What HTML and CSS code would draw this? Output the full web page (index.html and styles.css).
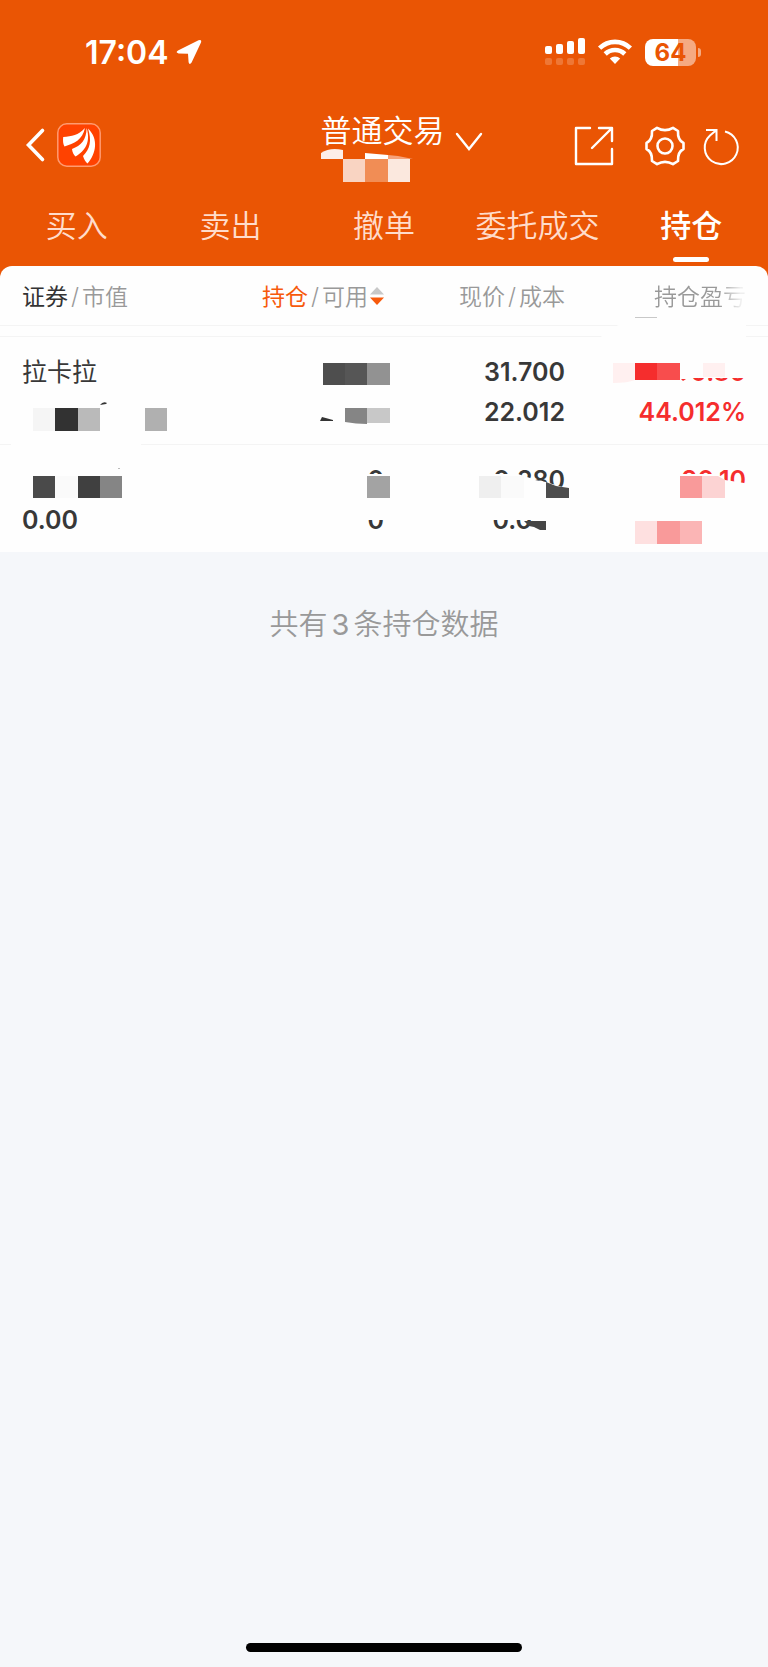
FILE: index.html
```html
<!DOCTYPE html>
<html lang="zh-CN">
<head>
  <meta charset="UTF-8" />
  <meta name="viewport" content="width=device-width, initial-scale=1" />
  <title>普通交易 - 持仓</title>
  <link rel="stylesheet" href="styles.css">
</head>
<body>
  <header class="header">
    <!-- 状态栏 -->
    <div class="status">
      <div class="status-left">
        <span class="time">17:04</span>
        <svg width="26" height="26" viewBox="0 0 26 26"><path d="M2 11.500 22.500 1.200Q26 0 25 3.500L15.600 23.500Q13.500 26.500 12.600 23.200L12 14.800 2.600 14.400Q-1 13.400 2 11.500Z" fill="#fff"/></svg>
      </div>
      <div class="status-right">
        <svg width="40" height="28" viewBox="0 0 40 28" fill="#fff">
          <rect x="0" y="8" width="7" height="8" rx="2"/><rect x="11" y="6" width="7" height="10" rx="2"/>
          <rect x="22" y="3" width="7" height="13" rx="2"/><rect x="33" y="0" width="7" height="16" rx="2"/>
          <g opacity=".2"><rect x="0" y="20" width="7" height="7" rx="2"/><rect x="11" y="20" width="7" height="7" rx="2"/><rect x="22" y="20" width="7" height="7" rx="2"/><rect x="33" y="20" width="7" height="7" rx="2"/></g>
        </svg>
        <svg width="34" height="26" viewBox="0 0 34 26">
          <g fill="none" stroke="#fff" stroke-width="4.6"><path d="M1.6 9.2a22 22 0 0 1 30.8 0"/><path d="M7.2 15a14 14 0 0 1 19.6 0"/></g>
          <path d="M11.8 19.6a7.4 7.4 0 0 1 10.4 0L17 25Z" fill="#fff"/>
        </svg>
        <span class="battery"><span class="battery-body">64</span><span class="battery-cap"></span></span>
      </div>
    </div>

    <!-- 导航栏 -->
    <div class="nav">
      <div class="nav-left">
        <button class="icon-btn" aria-label="返回">
          <svg width="20" height="34" viewBox="0 0 20 34"><path d="M16.500 2.500 2.500 17 16.500 31.500" fill="none" stroke="#fff" stroke-width="3.600" stroke-linecap="round"/></svg>
        </button>
        <a class="logo" href="#" aria-label="首页">
          <svg width="44" height="44" viewBox="0 0 44 44">
            <rect x=".8" y=".8" width="42.400" height="42.400" rx="9" fill="#ff4200" stroke="#ff9a70" stroke-width="1.500"/>
            <g fill="#fff">
              <path d="M28 5C21 12.500 15 13 6.200 14 5.800 18 6 21 7.500 23.500 17 20.500 25.500 17 28 5Z"/>
              <path d="M29.600 5C29.500 17 24 22.500 15 26 15.300 29 16.500 31.500 18.500 33.500 28 28 34 19 29.600 5Z"/>
              <path d="M31 5.500C35 18 33 26 26 33 27 36 28.300 38.500 30.500 40.500 39 31 42 16 31 5.500Z"/>
            </g>
          </svg>
        </a>
      </div>
      <button class="account">
        <span class="account-name">普通交易
          <svg class="mosaic account-mosaic" width="96" height="36" viewBox="323 146 96 36">
            <path d="M323 158V152Q332 146 345 149V158Z" fill="#fdeee8"/>
            <path d="M367 158V152L390 154V158Z" fill="#fff"/>
            <path d="M390 158V154L400 155 415 158Z" fill="#f6a27a"/>
            <rect x="345" y="158" width="22" height="23" fill="#f9d4c2"/>
            <rect x="367" y="158" width="23" height="23" fill="#f18d55"/>
            <rect x="390" y="158" width="22" height="23" fill="#fbe8de"/>
          </svg>
        </span>
        <svg class="arrow" width="28" height="20" viewBox="0 0 28 20"><path d="M2 2 14 17 26 2" fill="none" stroke="#fff" stroke-width="2.400" stroke-linecap="round"/></svg>
      </button>
      <div class="nav-right">
        <button class="icon-btn" aria-label="分享">
          <svg width="40" height="40" viewBox="0 0 40 40"><path d="M16 2H2V38H38V23M25 2H38V15M38 2 18 22" fill="none" stroke="#fff" stroke-width="2.400" stroke-linecap="round" stroke-linejoin="round"/></svg>
        </button>
        <button class="icon-btn icon-gear" aria-label="设置">
          <svg width="40" height="40" viewBox="0 0 40 40" fill="none" stroke="#fff" stroke-width="2.600" stroke-linejoin="round">
            <path d="M12 1.800Q20 6.500 28 1.800L33 5Q32.500 14 38.500 17V23Q32.500 26 33 35L28 38.200Q20 33.500 12 38.200L7 35Q7.500 26 1.500 23V17Q7.500 14 7 5Z"/>
            <circle cx="20" cy="20" r="7.500"/>
          </svg>
        </button>
        <button class="icon-btn icon-refresh" aria-label="刷新">
          <svg width="36" height="38" viewBox="0 0 36 38" fill="none" stroke="#fff" stroke-width="2"><path d="M22 4.500A16.500 16.500 0 1 1 7 8.500L13.500 3M3 3H13.500V14"/></svg>
        </button>
      </div>
    </div>

    <nav class="tabs">
      <a href="#">买入</a>
      <a href="#">卖出</a>
      <a href="#">撤单</a>
      <a href="#">委托成交</a>
      <a href="#" class="active">持仓</a>
    </nav>
  </header>

  <main>
    <!-- 持仓列表 -->
    <div class="panel">
      <table class="holdings">
        <thead>
          <tr>
            <th><b>证券</b><i>/</i>市值</th>
            <th><em>持仓</em><i>/</i>可用<svg class="sort" width="14" height="20" viewBox="0 0 14 20"><path d="M0 8.500 7 1 14 8.500Z" fill="#c8c8c8"/><path d="M0 11.500H14L7 19Z" fill="#f75a0c"/></svg></th>
            <th>现价<i>/</i>成本</th>
            <th class="fade">持仓盈亏</th>
          </tr>
        </thead>
        <tbody>
          <tr>
            <td>
              <div class="name">拉卡拉</div>
              <svg class="mosaic" width="181" height="108" viewBox="22 336 181 108">
                <rect x="11" y="442" width="130" height="4" fill="#fefefe"/>
                <path d="M100 405Q103 401 107 403L106 404Z" fill="#333"/>
                <rect x="33" y="408" width="22" height="23" fill="#f5f5f5"/>
                <rect x="55" y="408" width="23" height="23" fill="#323232"/>
                <rect x="78" y="408" width="22" height="23" fill="#bababa"/>
                <rect x="145" y="408" width="22" height="23" fill="#b0b0b0"/>
              </svg>
            </td>
            <td>
              <svg class="mosaic" width="181" height="108" viewBox="203 336 181 108">
                <rect x="323" y="363" width="22" height="22" fill="#4e4e4e"/>
                <rect x="345" y="363" width="22" height="22" fill="#565656"/>
                <rect x="367" y="363" width="23" height="22" fill="#929292"/>
                <path d="M345 408H367V424Q356 424 345 422Z" fill="#858585"/>
                <rect x="367" y="408" width="23" height="15" fill="#c8c8c8"/>
                <path d="M320 421 322 417 333 420V421Z" fill="#333"/>
              </svg>
            </td>
            <td>
              <div>31.700</div>
              <div>22.012</div>
            </td>
            <td class="up">
              <div>9.80</div>
              <div>44.012%</div>
              <svg class="mosaic" width="181" height="108" viewBox="565 336 181 108">
                <path d="M597 340 612 328 632 319H746V378H590Z" fill="#fefefe"/>
                <rect x="635" y="317" width="22" height="1" fill="#c8c8c8"/>
                <path d="M613 363H635V380Q628 383 613 383Z" fill="#fff0f0"/>
                <rect x="635" y="363" width="22" height="17" fill="#f52d2d"/>
                <rect x="657" y="363" width="23" height="17" fill="#f84d4d"/>
                <rect x="703" y="363" width="22" height="14" fill="#fff0f0"/>
                <path d="M681 379H686L683 381Z" fill="#f52d2d"/>
              </svg>
            </td>
          </tr>
          <tr>
            <td>
              <div></div>
              <div>0.00</div>
              <svg class="mosaic" width="181" height="108" viewBox="22 444 181 108">
                <rect x="33" y="476" width="22" height="22" fill="#4a4a4a"/>
                <rect x="55" y="476" width="23" height="22" fill="#fafafa"/>
                <rect x="78" y="476" width="22" height="22" fill="#404040"/>
                <rect x="100" y="476" width="22" height="22" fill="#858585"/>
                <rect x="118" y="468" width="2" height="1" fill="#bbb"/>
              </svg>
            </td>
            <td>
              <div>0</div>
              <div>0</div>
              <svg class="mosaic" width="181" height="108" viewBox="203 444 181 108">
                <rect x="340" y="474" width="54" height="46" fill="#fefefe"/>
                <rect x="367" y="476" width="23" height="22" fill="#a3a3a3"/>
              </svg>
            </td>
            <td>
              <div>0.280</div>
              <div>0.000</div>
              <svg class="mosaic" width="181" height="108" viewBox="384 444 181 108">
                <path d="M476 474H518L530 478 535 480 546 482 569 489V536H533V520H476Z" fill="#fefefe"/>
                <rect x="479" y="476" width="22" height="22" fill="#efefef"/>
                <rect x="501" y="476" width="23" height="22" fill="#fafafa"/>
                <path d="M546 482 556 486 569 488V498H546Z" fill="#4d4d4d"/>
                <path d="M524 521H546V530H540L534 527 529 526Z" fill="#454545"/>
              </svg>
            </td>
            <td class="up">
              <div>90.10</div>
              <div></div>
              <svg class="mosaic" width="181" height="108" viewBox="565 444 181 108">
                <path d="M670 474H715L725 480 738 482 750 484V500H670Z" fill="#fefefe"/>
                <rect x="680" y="476" width="22" height="22" fill="#f99a9a"/>
                <path d="M702 476H718L725 480V498H702Z" fill="#fcd3d3"/>
                <rect x="635" y="521" width="22" height="23" fill="#fee0e0"/>
                <rect x="657" y="521" width="23" height="23" fill="#f99a9a"/>
                <rect x="680" y="521" width="22" height="23" fill="#fbb5b5"/>
              </svg>
            </td>
          </tr>
        </tbody>
      </table>
    </div>
    <p class="summary">共有<span>3</span>条持仓数据</p>
  </main>

  <div class="home-bar"></div>
</body>
</html>
```
FILE: styles.css
```css
* { box-sizing: border-box; }
body {
  margin: 0;
  min-height: 100vh;
  display: flex;
  flex-direction: column;
  background: #f5f7fa;
  color: #383838;
  font-family: Inter, "Noto Sans CJK SC", sans-serif;
}
main { flex: 1; background: linear-gradient(#ea5504 20px, transparent 20px); }
a { color: inherit; text-decoration: none; }
button { border: 0; padding: 0; background: none; color: inherit; font: inherit; }
svg { display: block; flex: none; overflow: visible; }

/* header */
.header { background: #ea5504; color: #fff; }
.status { display: flex; justify-content: space-between; padding: 32px 67px 0 85px; height: 104px; }
.status-left, .status-right { display: flex; align-items: center; height: 40px; }
.status-left { gap: 7px; }
.status-right { gap: 13px; }
.time { font-size: 32px; font-weight: 600; }
.battery { display: flex; align-items: center; gap: 2px; }
.battery-body {
  width: 51px;
  height: 27px;
  border-radius: 8px;
  background: linear-gradient(90deg, #fff 64%, #f5aa82 64%);
  color: #ea5504;
  font-size: 24px;
  font-weight: 700;
  line-height: 27px;
  text-align: center;
}
.battery-cap { width: 3px; height: 9px; border-radius: 0 4px 4px 0; background: #f5aa82; }

.nav { display: grid; grid-template-columns: 1fr auto 1fr; align-items: center; height: 82px; padding: 0 29px 0 26px; }
.nav-left, .nav-right { display: flex; align-items: center; }
.nav-left { gap: 11px; }
.nav-right { justify-content: flex-end; padding-top: 2px; }
.icon-gear { margin-left: 31px; }
.icon-refresh { margin-left: 18px; }
.account { display: flex; align-items: flex-start; gap: 10px; margin: 5px 0 0 38px; }
.account-name { position: relative; padding-bottom: 34px; font-size: 31px; font-weight: 350; line-height: 36px; }
.account .arrow { margin-top: 19px; }
.account-mosaic.mosaic { left: 0; right: auto; top: auto; bottom: 0; }

.tabs { display: grid; grid-template-columns: repeat(5, 1fr); height: 80px; }
.tabs a { position: relative; font-size: 31px; font-weight: 350; line-height: 80px; text-align: center; color: #ffdccb; white-space: nowrap; }
.tabs .active { font-weight: 500; color: #fff; }
.tabs .active::after {
  content: "";
  position: absolute;
  left: 50%;
  bottom: 4px;
  width: 36px;
  height: 5px;
  margin-left: -18px;
  border-radius: 3px;
  background: #fff;
}

/* holdings */
.panel { padding: 0 22px; background: #fefefe; border-radius: 12px 12px 0 0; }
.holdings { width: 100%; table-layout: fixed; border-collapse: separate; border-spacing: 0; }
.holdings th {
  height: 70px;
  padding: 0;
  vertical-align: top;
  font-size: 23px;
  font-weight: 350;
  line-height: 62px;
  text-align: right;
  color: #999;
  white-space: nowrap;
}
.holdings th:first-child, .holdings td:first-child { position: relative; text-align: left; }
/* full-width row lines */
.holdings th:first-child::before, .holdings td:first-child::before {
  content: "";
  position: absolute;
  left: -22px;
  bottom: -1px;
  width: 100vw;
  border-bottom: 1px solid #f4f4f4;
}
.holdings th:first-child::before { height: 10px; border-top: 1px solid #f4f4f4; }
.holdings tr:last-child td::before { display: none; }
.holdings thead tr:last-child th::before { display: block; }
.holdings th b { font-weight: 400; color: #333; }
.holdings th em { font-style: normal; font-weight: 400; color: #f75a0c; }
.holdings th i { font-style: normal; padding: 0 3px; }
.sort { display: inline-block; margin-left: 2px; vertical-align: -1px; }
.holdings .fade { color: transparent; background: linear-gradient(90deg, #999 85%, #eee 97%); background-clip: text; -webkit-background-clip: text; }
.holdings td {
  position: relative;
  height: 108px;
  padding: 16px 0 11px;
  vertical-align: top;
  font-size: 25px;
  font-weight: 600;
  line-height: 40px;
  text-align: right;
}
.holdings td div { height: 40px; }
.holdings .name { font-weight: 400; }
.holdings .up { color: #f52d2d; }
.mosaic { position: absolute; right: 0; top: 0; }
td:first-child .mosaic { left: 0; right: auto; }

.summary { margin: 0; padding: 52px 0; font-size: 29px; font-weight: 350; line-height: 42px; text-align: center; color: #999; }
.summary span { padding: 0 4px; font-weight: 400; }

.home-bar { width: 36%; height: 9px; margin: 0 auto 15px; border-radius: 5px; background: #000; }
```
